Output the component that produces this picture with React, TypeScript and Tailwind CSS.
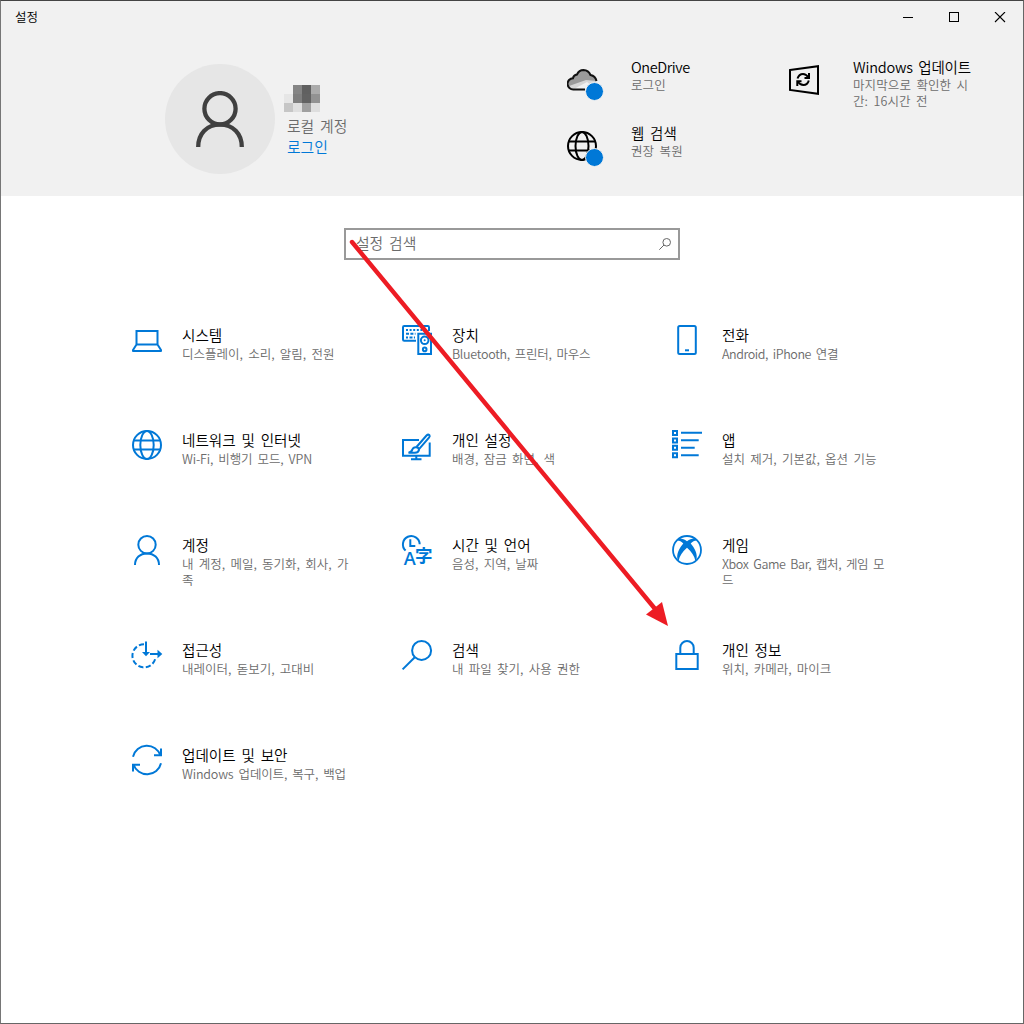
import type { ReactNode } from 'react';

type Item = {
  title: string;
  desc: string;
  icon: ReactNode;
  descClass?: string;
};

function Icon({ children }: { children: ReactNode }) {
  return (
    <svg
      width="30"
      height="30"
      viewBox="0 0 30 30"
      fill="none"
      stroke="#0078d7"
      strokeWidth="2"
      className="shrink-0 overflow-visible"
    >
      {children}
    </svg>
  );
}

const items: Item[] = [
  {
    title: '시스템',
    desc: '디스플레이, 소리, 알림, 전원',
    icon: (
      <Icon>
        <path d="M4.5 19V6H25.5V19" />
        <path d="M4.5 19.5H25.5L29 25V26H1V25Z" strokeLinejoin="round" />
      </Icon>
    ),
  },
  {
    title: '장치',
    desc: 'Bluetooth, 프린터, 마우스',
    descClass: 'tracking-[-0.28px]',
    icon: (
      <Icon>
        <path d="M14 15.8H2.2Q1 15.8 1 14.6V2.2Q1 1 2.2 1H25.8Q27 1 27 2.2V6" />
        <path d="M4 5H24" strokeDasharray="2 1.6" />
        <path d="M4 8.8H13.5M4 12.5H6M7.5 12.5H13" strokeDasharray="3 1.4" />
        <path d="M16.3 8.8H29V29H16.3Z" />
        <circle cx="22.7" cy="15.3" r="3.8" />
        <circle cx="22.7" cy="15.3" r="1" fill="#0078d7" stroke="none" />
        <circle cx="22.7" cy="24.4" r="1.8" />
      </Icon>
    ),
  },
  {
    title: '전화',
    desc: 'Android, iPhone 연결',
    descClass: 'tracking-[-0.42px]',
    icon: (
      <Icon>
        <rect x="6.2" y="1" width="17.6" height="28" rx="1.5" />
        <path d="M13 25.3H17" />
      </Icon>
    ),
  },
  {
    title: '네트워크 및 인터넷',
    desc: 'Wi-Fi, 비행기 모드, VPN',
    descClass: 'tracking-[-0.15px]',
    icon: (
      <Icon>
        <circle cx="15" cy="15" r="14" />
        <ellipse cx="15" cy="15" rx="6.7" ry="14" />
        <path d="M1.8 10.5H28.2M1.8 19.5H28.2" />
      </Icon>
    ),
  },
  {
    title: '개인 설정',
    desc: '배경, 잠금 화면, 색',
    icon: (
      <Icon>
        <path d="M17 10H1V25.8H27.7V12.5" />
        <path d="M14.3 26V29M9 29.2H19.5" />
        <path d="M14.5 17L24.5 5.5Q26 4 27.3 5Q28.3 6.2 27 7.7L17 19.2" />
        <path d="M14 17.2Q17 17.2 17 20Q16.2 23 12.5 22.8H6.5Q9.7 22 10.3 19.5Q11.3 17 14 17.2Z" />
      </Icon>
    ),
  },
  {
    title: '앱',
    desc: '설치 제거, 기본값, 옵션 기능',
    icon: (
      <Icon>
        <path d="M1 1H5V5H1ZM1 8.4H5V12.4H1ZM1 15.8H5V19.8H1ZM1 23.2H5V27.2H1Z" />
        <path d="M9 2.8H30M9 10.3H26.7M9 17.7H22.7M9 25.3H26.7" />
      </Icon>
    ),
  },
  {
    title: '계정',
    desc: '내 계정, 메일, 동기화, 회사, 가족',
    icon: (
      <Icon>
        <circle cx="15" cy="9.7" r="8.7" />
        <path d="M3 30C3 23 8 18.4 15 18.4S27 23 27 30" />
      </Icon>
    ),
  },
  {
    title: '시간 및 언어',
    desc: '음성, 지역, 날짜',
    icon: (
      <Icon>
        <path d="M3.6 15.6A8.4 8.4 0 1 1 17.7 9.2" />
        <path d="M8.3 4.3V11H13.3" />
        <text
          x="1.8"
          y="30"
          fontSize="18.5"
          textLength="12"
          lengthAdjust="spacingAndGlyphs"
          fill="#0078d7"
          stroke="none"
          className="font-['Open_Sans',sans-serif] font-semibold"
        >
          A
        </text>
        <text
          x="13"
          y="26.7"
          fontSize="17.5"
          fill="#0078d7"
          stroke="none"
          className="font-['Noto_Sans_CJK_KR',sans-serif] font-bold"
        >
          字
        </text>
      </Icon>
    ),
  },
  {
    title: '게임',
    desc: 'Xbox Game Bar, 캡처, 게임 모드',
    descClass: 'tracking-[-0.42px]',
    icon: (
      <Icon>
        <circle cx="15" cy="15" r="14" strokeWidth="1.8" />
        <path
          d="M15 6.2C12 4 9.5 3.2 6.5 3.7L5.5 5.5C7.5 5.5 9.5 6.7 11.3 8.6C7.5 13 4.2 19 5.5 24.5L6.7 25.5C7.5 21 10.5 16.5 15 12.7C19.5 16.5 22.5 21 23.3 25.5L24.5 24.5C25.8 19 22.5 13 18.7 8.6C20.5 6.7 22.5 5.5 24.5 5.5L23.5 3.7C20.5 3.2 18 4 15 6.2Z"
          fill="#0078d7"
          stroke="none"
        />
      </Icon>
    ),
  },
  {
    title: '접근성',
    desc: '내레이터, 돋보기, 고대비',
    icon: (
      <Icon>
        <path d="M12 4.2A11.6 11.6 0 1 0 23.5 17.5" strokeDasharray="5.2 2.4" />
        <path d="M14 1.5V14" />
        <path d="M10 12H18L14 16.2Z" fill="#0078d7" stroke="none" />
        <path d="M18 14H27" />
        <path d="M25.5 9.8V18.2L30.3 14Z" fill="#0078d7" stroke="none" />
      </Icon>
    ),
  },
  {
    title: '검색',
    desc: '내 파일 찾기, 사용 권한',
    icon: (
      <Icon>
        <circle cx="19.6" cy="10.4" r="9.5" />
        <path d="M12.8 17.2L0.6 29.4" />
      </Icon>
    ),
  },
  {
    title: '개인 정보',
    desc: '위치, 카메라, 마이크',
    icon: (
      <Icon>
        <rect x="4.3" y="14" width="21.4" height="15" />
        <path d="M8.3 14V7.7A6.7 6.7 0 0 1 21.7 7.7V14" />
      </Icon>
    ),
  },
  {
    title: '업데이트 및 보안',
    desc: 'Windows 업데이트, 복구, 백업',
    descClass: 'tracking-[-0.17px]',
    icon: (
      <Icon>
        <path d="M1 11.8A14.3 14.3 0 0 1 28.5 10.5M29 18.2A14.3 14.3 0 0 1 1.5 19.5" />
        <path d="M29 3.5V10.3H22M1 26.5V19.7H8" />
      </Icon>
    ),
  },
];

// Pixelated user name, 9px cells
const mosaic = [
  'bg-transparent', 'bg-[#858585]', 'bg-[#606060]', 'bg-[#ababab]',
  'bg-[#e6e6e6]', 'bg-[#7e7e7e]', 'bg-[#626262]', 'bg-[#929292]',
  'bg-[#c6c6c6]', 'bg-[#dfdfdf]', 'bg-[#a0a0a0]', 'bg-[#dedede]',
];

function TitleBar() {
  return (
    <div className="flex h-8 items-center justify-between pl-[14px] pr-4">
      <span className="text-[12.5px] leading-4">설정</span>
      <svg width="104" height="11" viewBox="0 0 104 11" fill="none" stroke="#000">
        <path d="M0 5.5H10" />
        <rect x="46.5" y="0.5" width="9" height="9" />
        <path d="M92 0L102 10M102 0L92 10" strokeWidth="1.1" />
      </svg>
    </div>
  );
}

type StatusProps = { icon: ReactNode; title: string; titleClass?: string; children: ReactNode };

function Status({ icon, title, titleClass = '', children }: StatusProps) {
  return (
    <div className="flex">
      <div className="relative w-16 shrink-0">{icon}</div>
      <div>
        <div className={`whitespace-nowrap text-[14.5px] leading-[18px] ${titleClass}`}>{title}</div>
        <div className="whitespace-nowrap pt-px text-[12.5px] leading-4 tracking-[0.1px] text-[#6b6b6b]">
          {children}
        </div>
      </div>
    </div>
  );
}

function Badge() {
  return (
    <span className="absolute left-[18px] top-[14px] size-[19px] rounded-full border border-[#f1f1f1] bg-[#0078d7]" />
  );
}

function Header() {
  return (
    <header className="h-[195px] bg-[#f1f1f1]">
      <TitleBar />
      <div className="flex pl-[164px]">
        <div className="mt-[31px] flex size-[110px] shrink-0 items-end justify-center rounded-full bg-[#e6e6e6] pb-[27px]">
          <svg width="50" height="56" viewBox="0 0 50 56" fill="none" stroke="#404040" strokeWidth="4.3">
            <circle cx="25" cy="17.7" r="15.6" />
            <path d="M3.2 56C3.2 42.5 12 33.6 25 33.6S46.8 42.5 46.8 56" />
          </svg>
        </div>
        <div className="ml-[9px] mt-[52px] w-[283px]">
          <div className="grid w-9 grid-cols-4">
            {mosaic.map((c, i) => (
              <span key={i} className={`h-[9px] ${c}`} />
            ))}
          </div>
          <div className="ml-[3px] mt-[3px] text-[14.8px] leading-[21px] text-[#6b6b6b]">로컬 계정</div>
          <div className="ml-[3px] text-[14.8px] leading-[21px] text-[#0078d7]">로그인</div>
        </div>
        <div className="mt-[25px] flex w-[222px] flex-col gap-[30px]">
          <Status
            title="OneDrive"
            titleClass="tracking-[-0.4px]"
            icon={
              <div className="relative mt-[10px] h-[26px]">
                <svg width="32" height="24" viewBox="0 0 32 24" fill="none" className="absolute left-0 top-0">
                  <path d="M6.5 21.5A5.6 5.6 0 0 1 6 10.2Q6.5 7 10 6.5Q12 2 16.5 2Q21.5 2.2 23.5 7Q28.5 8 29.5 13Q30 20 25 21.5Z" fill="#d6d6d6" />
                  <path d="M2 18Q1 11 6 10.2Q6.5 7 10 6.5Q12 2 16.5 2Q21.5 2.2 23.5 7Q28.5 8 29.5 13L19 12Z" fill="#9a9a9a" />
                  <path d="M6 21.5L20 14L27 20L25 21.5Z" fill="#f1f1f1" />
                  <path d="M18 21.5H6.5A5.6 5.6 0 0 1 6 10.2Q6.5 7 10 6.5Q12 2 16.5 2Q21.5 2.2 23.5 7Q28.5 8 29.5 13" stroke="#111" strokeWidth="2" />
                </svg>
                <Badge />
              </div>
            }
          >
            로그인
          </Status>
          <Status
            title="웹 검색"
            icon={
              <div className="relative mt-[10px] h-[26px]">
                <svg width="32" height="32" viewBox="0 0 32 32" fill="none" stroke="#000" strokeWidth="2" className="absolute -left-px -top-1">
                  <circle cx="16" cy="16" r="14" />
                  <ellipse cx="16" cy="16" rx="6.5" ry="14" />
                  <path d="M3 11.5H29M3 20.5H29" />
                </svg>
                <Badge />
              </div>
            }
          >
            권장 복원
          </Status>
        </div>
        <div className="mt-[25px] w-[186px]">
          <Status
            title="Windows 업데이트"
            titleClass="tracking-[-0.2px]"
            icon={
              <svg width="30" height="30" viewBox="0 0 30 30" fill="none" stroke="#000" strokeWidth="2" className="mt-[7px]">
                <path d="M1 5L29 1.2V28.8L1 25Z" />
                <path d="M8.5 13.5Q10 9 14 9Q17 9 19.5 12.5M19.8 15.5Q18.5 20 14.5 20Q11 20 8.8 16.8" />
                <path d="M20 8V13H15.5M8.3 21V16.2H12.5" />
              </svg>
            }
          >
            마지막으로 확인한 시
            <br />
            간: 16시간 전
          </Status>
        </div>
      </div>
    </header>
  );
}

function SearchBox() {
  return (
    <div className="mx-auto mt-8 flex h-8 w-[336px] items-center justify-between border-2 border-[#999] pl-[10px] pr-[7px]">
      <span className="pb-0.5 text-[14.8px] leading-5 text-[#6b6b6b]">설정 검색</span>
      <svg width="12" height="12" viewBox="0 0 12 12" fill="none" stroke="#666" strokeWidth="1">
        <circle cx="7.7" cy="4.3" r="3.8" />
        <path d="M5 7L0.3 11.7" />
      </svg>
    </div>
  );
}

export default function App() {
  return (
    <div className="relative h-[1024px] w-[1024px] overflow-hidden border border-t-[#444] border-r-[#666] border-b-[#666] border-l-[#767676] bg-white font-['Noto_Sans_CJK_KR',sans-serif] font-[350] text-black [word-spacing:2.5px]">
      <Header />
      <SearchBox />
      <main className="ml-[131px] mt-[65px] grid grid-cols-[270px_270px_270px] auto-rows-[105px]">
        {items.map((item) => (
          <div key={item.title} className="flex">
            {item.icon}
            <div className="ml-5 w-[168px]">
              <div className="whitespace-nowrap text-[14.6px] leading-5">{item.title}</div>
              <div className={`break-all pt-px text-[12.5px] leading-4 text-[#6b6b6b] ${item.descClass ?? ''}`}>
                {item.desc}
              </div>
            </div>
          </div>
        ))}
      </main>

      {/* Arrow pointing from the search box to the privacy tile */}
      <svg width="1024" height="1024" viewBox="0 0 1024 1024" className="pointer-events-none absolute -left-px -top-px">
        <path d="M352 242L656 610" stroke="#ed1c24" strokeWidth="4.4" strokeLinecap="round" />
        <path d="M668 626L662 602L646 614.5Z" fill="#ed1c24" />
      </svg>
    </div>
  );
}
